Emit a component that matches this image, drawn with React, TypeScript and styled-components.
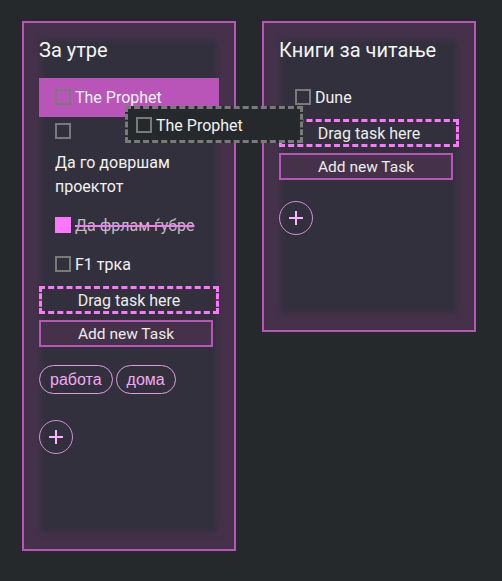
import React from 'react';
import styled, { createGlobalStyle } from 'styled-components';

const GlobalStyle = createGlobalStyle`
  body {
    margin: 0;
    background: #25292c;
    font-family: Roboto, "Noto Sans", sans-serif;
    color: #f0f0f0;
  }
`;

const Board = styled.div`
  position: relative;
  display: flex;
  align-items: flex-start;
  gap: 26px;
  padding: 21px 22px;
  min-height: 581px;
  box-sizing: border-box;
`;

const Column = styled.div`
  width: 214px;
  box-sizing: border-box;
  border: 2px solid #b955b9;
  background: #32303d;
  box-shadow: inset 0 0 6px 17px #45324a;
  padding: 15px 15px 95px;
  display: flex;
  flex-direction: column;
`;

const Title = styled.h2`
  margin: 0 0 16px;
  font-size: 20px;
  line-height: 24px;
  font-weight: 400;
  color: #f4f4f4;
`;

const Item = styled.div<{ $active?: boolean }>`
  display: flex;
  flex-wrap: wrap;
  align-items: center;
  gap: 12px 4px;
  padding: 8px 16px 7px;
  font-size: 16px;
  line-height: 24px;
  background: ${({ $active }) => ($active ? '#b955b9' : 'transparent')};
`;

const Check = styled.span<{ $done?: boolean }>`
  width: 16px;
  height: 16px;
  box-sizing: border-box;
  flex: none;
  margin-top: -2px;
  border: 2px solid ${({ $done }) => ($done ? '#ff77ff' : '#7a7a7a')};
  background: ${({ $done }) => ($done ? '#ff77ff' : 'transparent')};
`;

const Label = styled.span<{ $done?: boolean; $block?: boolean }>`
  color: ${({ $done }) => ($done ? '#bdbdbd' : '#f2f2f2')};
  text-decoration: ${({ $done }) => ($done ? 'line-through' : 'none')};
  text-decoration-color: #ff77ff;
  text-decoration-thickness: 2px;
  flex-basis: ${({ $block }) => ($block ? '100%' : 'auto')};
`;

const DropZone = styled.div`
  margin-top: 2px;
  height: 28px;
  box-sizing: border-box;
  border: 3px dashed #ff77ff;
  display: flex;
  align-items: center;
  justify-content: center;
  font-size: 16px;
  color: #ececec;
`;

const AddButton = styled.button`
  margin-top: 6px;
  width: calc(100% - 6px);
  height: 27px;
  box-sizing: border-box;
  border: 2px solid #b955b9;
  background: #45324a;
  color: #ececec;
  font-family: Roboto, "Noto Sans", sans-serif;
  font-size: 15.5px;
  padding: 0;
`;

const Tags = styled.div`
  display: flex;
  gap: 3px;
  margin: 18px 0 5px;
`;

const Tag = styled.span`
  height: 29px;
  box-sizing: border-box;
  padding: 0 10px;
  border: 1px solid #e09be0;
  border-radius: 15px;
  display: flex;
  align-items: center;
  font-family: "Liberation Sans", Arial, sans-serif;
  font-size: 16px;
  color: #f3a9f3;
`;

const PlusButton = styled.button`
  margin-top: 21px;
  width: 34px;
  height: 34px;
  border-radius: 50%;
  border: 1px solid #d58ad5;
  background: transparent;
  display: flex;
  align-items: center;
  justify-content: center;
  padding: 0;
`;

const Ghost = styled.div`
  position: absolute;
  left: 125px;
  top: 106px;
  width: 178px;
  height: 37px;
  box-sizing: border-box;
  border: 3px dashed #7a7a7a;
  background: #25292c;
  display: flex;
  align-items: center;
  gap: 4px;
  padding: 2px 0 0 8px;
  font-size: 16px;
  color: #ffffff;
`;

const Plus = () => (
  <svg width="16" height="16" viewBox="0 0 16 16">
    <path d="M8 1v14M1 8h14" stroke="#ffb3ff" strokeWidth="2" />
  </svg>
);

export default function App() {
  return (
    <>
      <GlobalStyle />
      <Board>
        <Column>
          <Title>За утре</Title>
          <Item $active>
            <Check />
            <Label>The Prophet</Label>
          </Item>
          <Item>
            <Check />
            <Label $block>Да го довршам проектот</Label>
          </Item>
          <Item>
            <Check $done />
            <Label $done>Да фрлам ѓубре</Label>
          </Item>
          <Item>
            <Check />
            <Label>F1 трка</Label>
          </Item>
          <DropZone>Drag task here</DropZone>
          <AddButton>Add new Task</AddButton>
          <Tags>
            <Tag>работа</Tag>
            <Tag>дома</Tag>
          </Tags>
          <PlusButton>
            <Plus />
          </PlusButton>
        </Column>
        <Column>
          <Title>Книги за читање</Title>
          <Item>
            <Check />
            <Label>Dune</Label>
          </Item>
          <DropZone>Drag task here</DropZone>
          <AddButton>Add new Task</AddButton>
          <PlusButton>
            <Plus />
          </PlusButton>
        </Column>
        <Ghost>
          <Check />
          <Label>The Prophet</Label>
        </Ghost>
      </Board>
    </>
  );
}
